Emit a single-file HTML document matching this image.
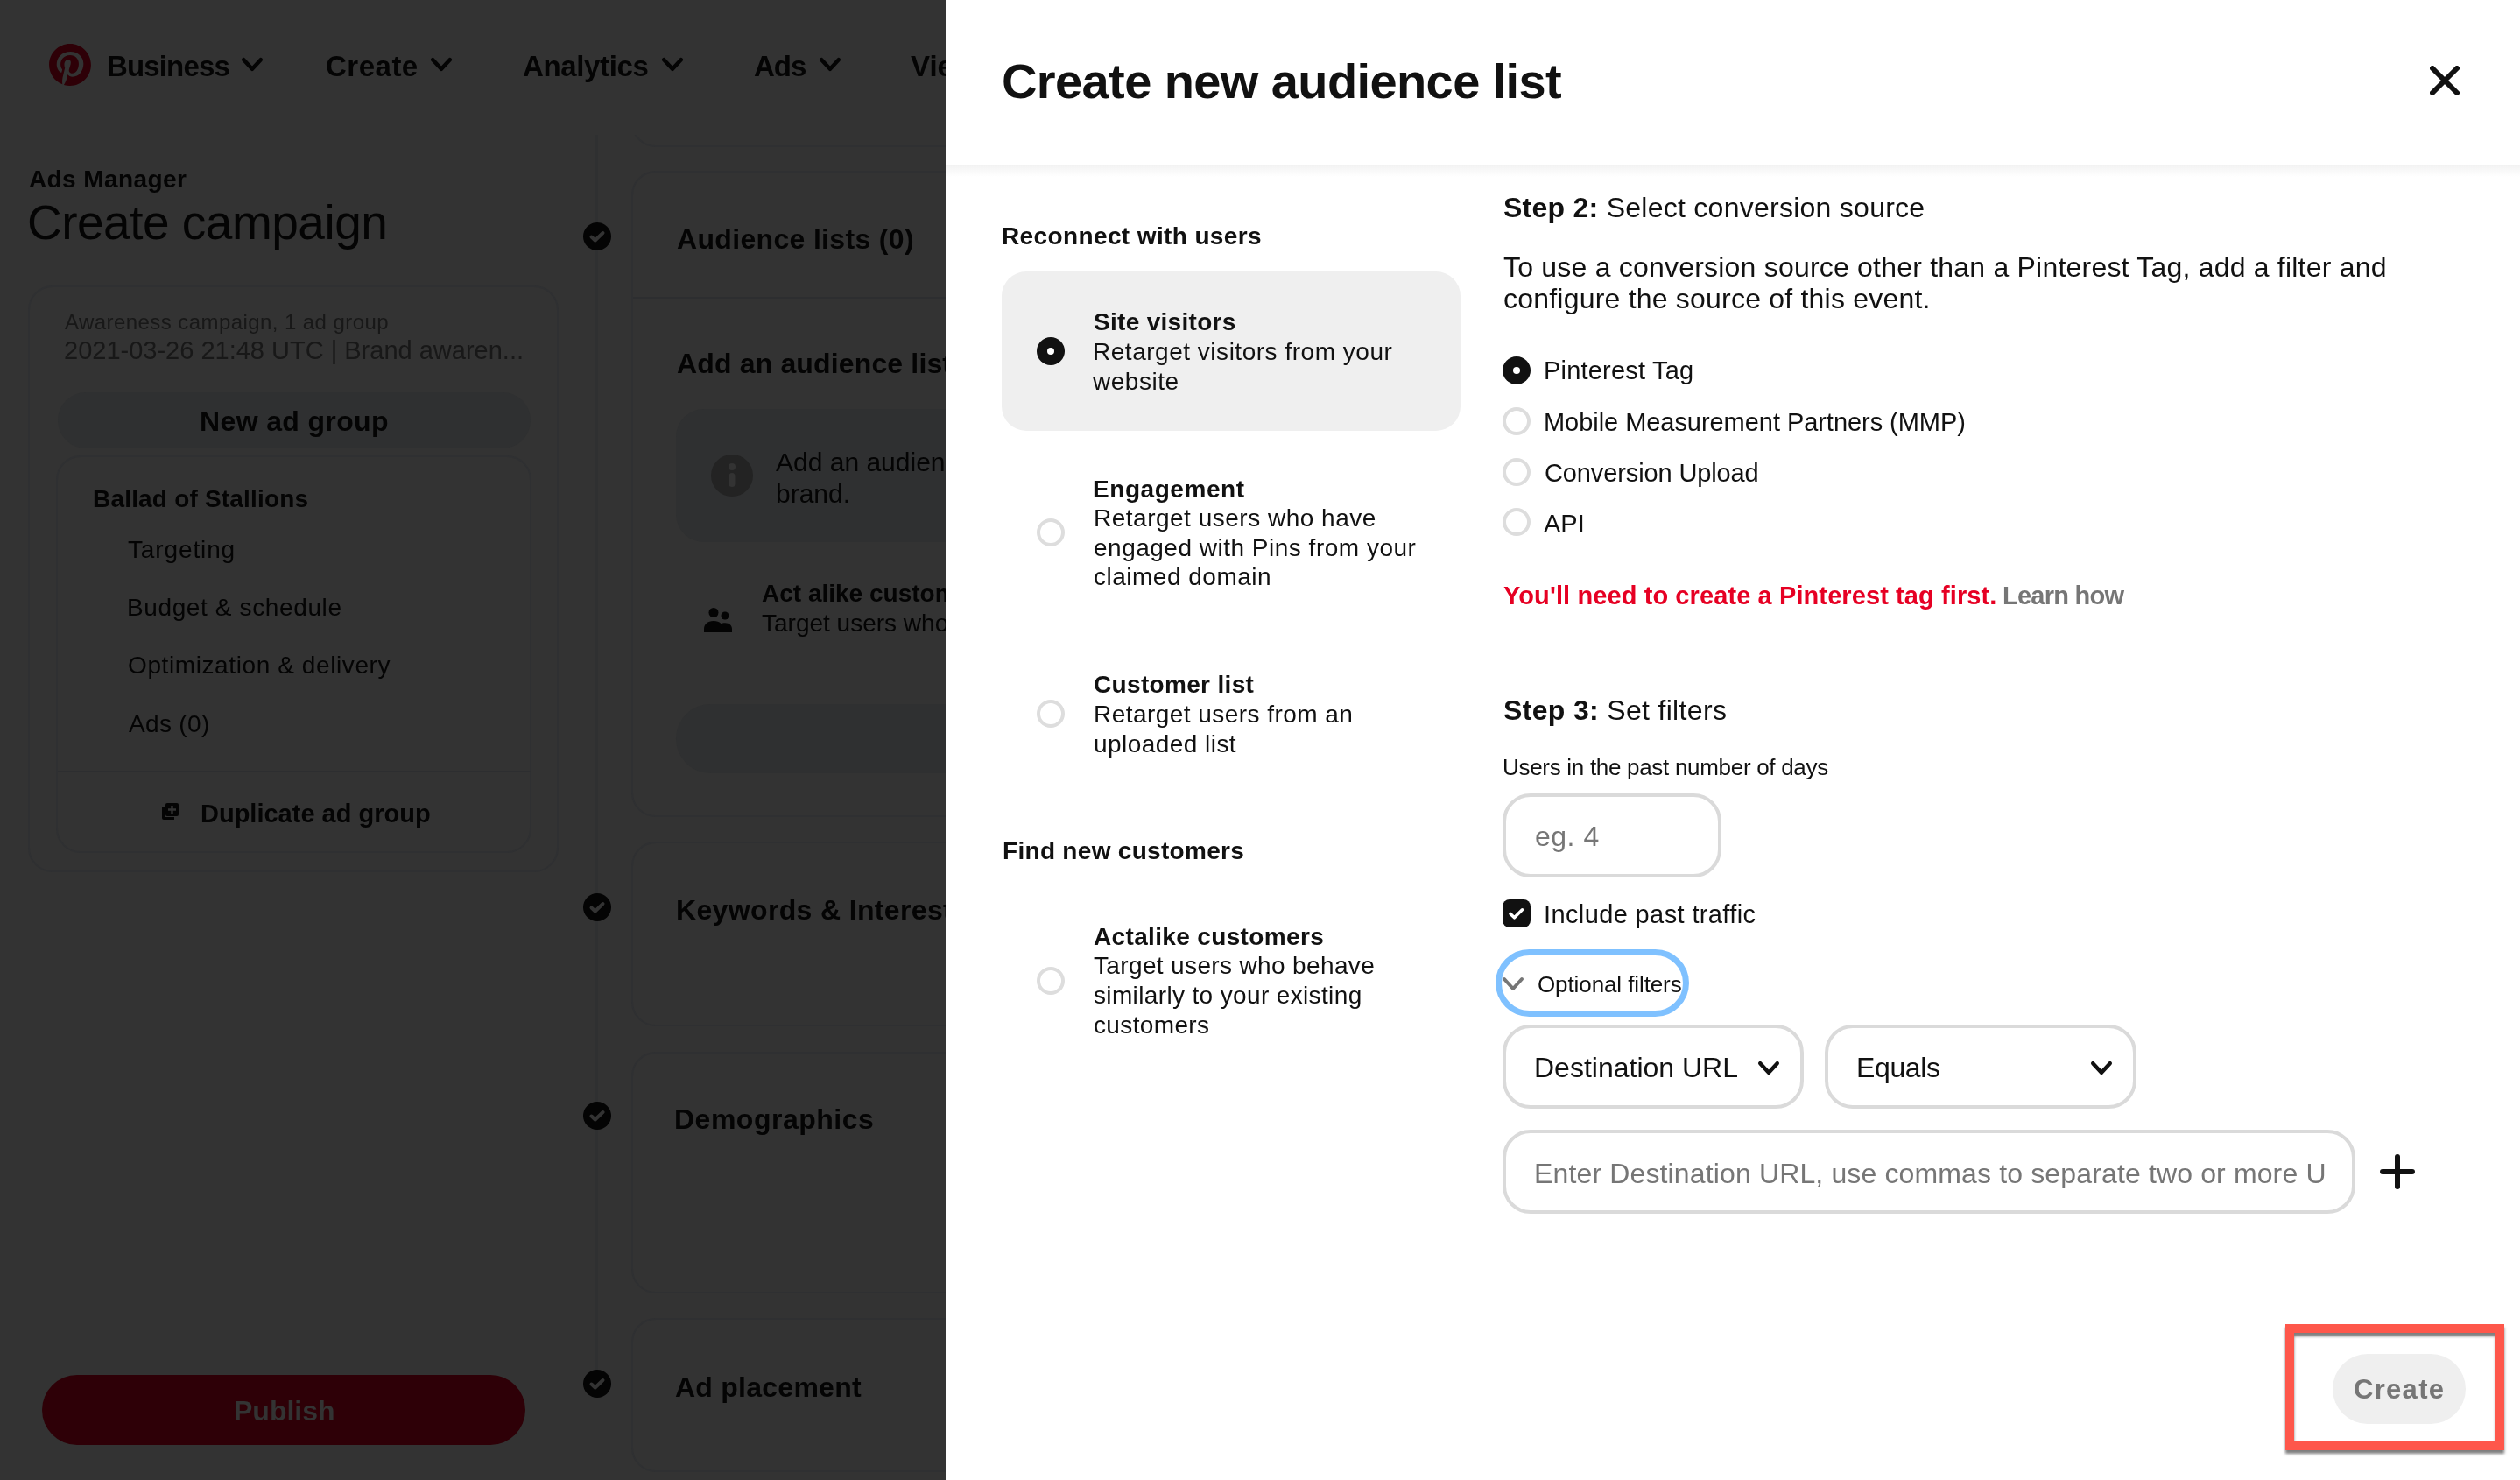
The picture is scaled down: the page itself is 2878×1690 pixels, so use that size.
<!DOCTYPE html>
<html><head><meta charset="utf-8"><style>
html,body{margin:0;padding:0;}
body{width:2878px;height:1690px;overflow:hidden;background:#333;position:relative;font-family:'Liberation Sans', sans-serif;}
.t{position:absolute;white-space:nowrap;-webkit-font-smoothing:antialiased;will-change:transform;}
.card{position:absolute;box-sizing:border-box;border:2px solid #2f3032;}
#modal{position:absolute;left:1080px;top:0;width:1798px;height:1690px;background:#fff;overflow:hidden;}
.inp{position:absolute;box-sizing:border-box;border:4px solid #dadada;border-radius:32px;background:#fff;}
</style></head><body>
<svg style="position:absolute;left:56px;top:50px" width="48" height="48" viewBox="0 0 24 24"><path fill="#2e0007" d="M12.017 0C5.396 0 .029 5.367.029 11.987c0 5.079 3.158 9.417 7.618 11.162-.105-.949-.199-2.403.041-3.439.219-.937 1.406-5.957 1.406-5.957s-.359-.72-.359-1.781c0-1.663.967-2.911 2.168-2.911 1.024 0 1.518.769 1.518 1.688 0 1.029-.653 2.567-.992 3.992-.285 1.193.6 2.165 1.775 2.165 2.128 0 3.768-2.245 3.768-5.487 0-2.861-2.063-4.869-5.008-4.869-3.41 0-5.409 2.562-5.409 5.199 0 1.033.394 2.143.889 2.741.099.12.112.225.085.345-.09.375-.293 1.199-.334 1.363-.053.225-.172.271-.401.165-1.495-.69-2.433-2.878-2.433-4.646 0-3.776 2.748-7.252 7.920-7.252 4.158 0 7.392 2.967 7.392 6.923 0 4.135-2.607 7.462-6.233 7.462-1.214 0-2.354-.629-2.758-1.379l-.749 2.848c-.269 1.045-1.004 2.352-1.498 3.146 1.123.345 2.306.535 3.55.535 6.607 0 11.985-5.365 11.985-11.987C23.970 5.390 18.592.026 11.985.026L12.017 0z"/></svg>
<div class="t" style="left:122px;top:58.6px;font-size:33px;line-height:33px;font-weight:700;color:#040404;letter-spacing:-0.85px;">Business</div>
<svg style="position:absolute;left:276px;top:66px;overflow:visible" width="24" height="15" viewBox="0 0 24 15"><path d="M2.25 2.25 L12.0 12.75 L21.75 2.25" fill="none" stroke="#040404" stroke-width="4.5" stroke-linecap="round" stroke-linejoin="round"/></svg>
<div class="t" style="left:372px;top:58.6px;font-size:33px;line-height:33px;font-weight:700;color:#040404;letter-spacing:0.5px;">Create</div>
<svg style="position:absolute;left:492px;top:66px;overflow:visible" width="24" height="15" viewBox="0 0 24 15"><path d="M2.25 2.25 L12.0 12.75 L21.75 2.25" fill="none" stroke="#040404" stroke-width="4.5" stroke-linecap="round" stroke-linejoin="round"/></svg>
<div class="t" style="left:597px;top:58.6px;font-size:33px;line-height:33px;font-weight:700;color:#040404;letter-spacing:-0.37px;">Analytics</div>
<svg style="position:absolute;left:756px;top:66px;overflow:visible" width="24" height="15" viewBox="0 0 24 15"><path d="M2.25 2.25 L12.0 12.75 L21.75 2.25" fill="none" stroke="#040404" stroke-width="4.5" stroke-linecap="round" stroke-linejoin="round"/></svg>
<div class="t" style="left:861px;top:58.6px;font-size:33px;line-height:33px;font-weight:700;color:#040404;letter-spacing:-1px;">Ads</div>
<svg style="position:absolute;left:936px;top:66px;overflow:visible" width="24" height="15" viewBox="0 0 24 15"><path d="M2.25 2.25 L12.0 12.75 L21.75 2.25" fill="none" stroke="#040404" stroke-width="4.5" stroke-linecap="round" stroke-linejoin="round"/></svg>
<div class="t" style="left:1040px;top:58.6px;font-size:33px;line-height:33px;font-weight:700;color:#040404;letter-spacing:0px;">View</div>
<div class="t" style="left:33px;top:190.8px;font-size:28px;line-height:28px;font-weight:700;color:#040404;letter-spacing:0.4px;">Ads Manager</div>
<div class="t" style="left:31px;top:227.4px;font-size:55px;line-height:55px;font-weight:400;color:#040404;letter-spacing:-0.5px;">Create campaign</div>
<div class="card" style="left:32px;top:326px;width:606px;height:670px;border-radius:28px"></div>
<div class="t" style="left:74px;top:355.7px;font-size:24px;line-height:24px;font-weight:400;color:#181818;letter-spacing:0.43px;">Awareness campaign, 1 ad group</div>
<div class="t" style="left:73px;top:385.5px;font-size:29px;line-height:29px;font-weight:400;color:#181818;letter-spacing:0px;">2021-03-26 21:48 UTC | Brand awaren...</div>
<div style="position:absolute;left:66px;top:448px;width:540px;height:64px;border-radius:32px;background:#2f3031"></div>
<div class="t" style="left:228px;top:464.9px;font-size:32px;line-height:32px;font-weight:700;color:#040404;letter-spacing:0.36px;">New ad group</div>
<div class="card" style="left:64px;top:520px;width:543px;height:454px;border-radius:28px"></div>
<div class="t" style="left:106px;top:556.3px;font-size:28px;line-height:28px;font-weight:700;color:#040404;letter-spacing:0.19px;">Ballad of Stallions</div>
<div class="t" style="left:146px;top:614.3px;font-size:28px;line-height:28px;font-weight:400;color:#040404;letter-spacing:0.87px;">Targeting</div>
<div class="t" style="left:145px;top:680.3px;font-size:28px;line-height:28px;font-weight:400;color:#040404;letter-spacing:0.62px;">Budget &amp; schedule</div>
<div class="t" style="left:145.6px;top:746.3px;font-size:28px;line-height:28px;font-weight:400;color:#040404;letter-spacing:0.6px;">Optimization &amp; delivery</div>
<div class="t" style="left:147px;top:812.8px;font-size:28px;line-height:28px;font-weight:400;color:#040404;letter-spacing:0.33px;">Ads (0)</div>
<div style="position:absolute;left:66px;top:880px;width:540px;height:2px;background:#2d2e30"></div>
<svg style="position:absolute;left:183px;top:916px" width="22" height="22" viewBox="0 0 22 22"><path d="M2 6v12a2 2 0 0 0 2 2h12v-3H5V6z" fill="#040404"/><rect x="6" y="1" width="15" height="15" rx="2" fill="#040404"/><path d="M13.5 4v9M9 8.5h9" stroke="#333" stroke-width="2.4"/></svg>
<div class="t" style="left:228.6px;top:914.5px;font-size:29px;line-height:29px;font-weight:700;color:#040404;letter-spacing:0px;">Duplicate ad group</div>
<div style="position:absolute;left:48px;top:1570px;width:552px;height:80px;border-radius:40px;background:#2e0007"></div>
<div class="t" style="left:266.6px;top:1594.9px;font-size:32px;line-height:32px;font-weight:700;color:#333;letter-spacing:0px;">Publish</div>
<div style="position:absolute;left:680px;top:154px;width:3px;height:1416px;background:#2f3031"></div>
<div class="card" style="left:721px;top:-40px;width:500px;height:208px;border-radius:28px;clip-path:inset(194px 0 0 0)"></div>
<div class="card" style="left:721px;top:195px;width:500px;height:738px;border-radius:28px"></div>
<svg style="position:absolute;left:666px;top:254px" width="32" height="32" viewBox="0 0 32 32"><circle cx="16" cy="16" r="16" fill="#040404"/><path d="M9.5 16.5l4.2 4 8.8-8.5" fill="none" stroke="#333" stroke-width="4" stroke-linecap="round" stroke-linejoin="round"/></svg>
<div class="t" style="left:773px;top:256.9px;font-size:32px;line-height:32px;font-weight:700;color:#040404;letter-spacing:0.33px;">Audience lists (0)</div>
<div style="position:absolute;left:723px;top:339px;width:400px;height:2px;background:#2d2e30"></div>
<div class="t" style="left:773px;top:398.9px;font-size:32px;line-height:32px;font-weight:700;color:#040404;letter-spacing:0.15px;">Add an audience list</div>
<div style="position:absolute;left:772px;top:467px;width:400px;height:152px;border-radius:32px;background:#2f3031"></div>
<svg style="position:absolute;left:812px;top:519px" width="48" height="48" viewBox="0 0 48 48"><circle cx="24" cy="24" r="24" fill="#232323"/><circle cx="24" cy="14" r="4" fill="#333"/><rect x="20.5" y="21" width="7" height="16" rx="3.5" fill="#333"/></svg>
<div class="t" style="left:886px;top:510.4px;font-size:30px;line-height:35.5px;font-weight:400;color:#040404;letter-spacing:0px;">Add an audience list to reach users who have engaged with your<br>brand.</div>
<svg style="position:absolute;left:804px;top:694px" width="32" height="28" viewBox="0 0 32 28"><circle cx="11" cy="5.5" r="5.5" fill="#040404"/><circle cx="24" cy="9" r="4.5" fill="#040404"/><path d="M0 28v-4c0-5 4-9 11-9s11 4 11 9v4z" fill="#040404"/><path d="M21 28v-4c0-2-.5-4-2-5.5 1.5-.8 3-1.2 5-1.2 5 0 8 3 8 7v3.7z" fill="#040404"/></svg>
<div class="t" style="left:870px;top:664.3px;font-size:28px;line-height:28px;font-weight:700;color:#040404;letter-spacing:0px;">Act alike customers</div>
<div class="t" style="left:870px;top:698.3px;font-size:28px;line-height:28px;font-weight:400;color:#040404;letter-spacing:0px;">Target users who behave similarly</div>
<div style="position:absolute;left:772px;top:804px;width:400px;height:79px;border-radius:40px;background:#2f3031"></div>
<div class="card" style="left:721px;top:961px;width:500px;height:211px;border-radius:28px"></div>
<svg style="position:absolute;left:666px;top:1020px" width="32" height="32" viewBox="0 0 32 32"><circle cx="16" cy="16" r="16" fill="#040404"/><path d="M9.5 16.5l4.2 4 8.8-8.5" fill="none" stroke="#333" stroke-width="4" stroke-linecap="round" stroke-linejoin="round"/></svg>
<div class="t" style="left:771.8px;top:1022.9px;font-size:32px;line-height:32px;font-weight:700;color:#040404;letter-spacing:0.35px;">Keywords &amp; Interests</div>
<div class="card" style="left:721px;top:1201px;width:500px;height:276px;border-radius:28px"></div>
<svg style="position:absolute;left:666px;top:1257.5px" width="32" height="32" viewBox="0 0 32 32"><circle cx="16" cy="16" r="16" fill="#040404"/><path d="M9.5 16.5l4.2 4 8.8-8.5" fill="none" stroke="#333" stroke-width="4" stroke-linecap="round" stroke-linejoin="round"/></svg>
<div class="t" style="left:769.8px;top:1261.9px;font-size:32px;line-height:32px;font-weight:700;color:#040404;letter-spacing:0.5px;">Demographics</div>
<div class="card" style="left:721px;top:1505px;width:500px;height:176px;border-radius:28px"></div>
<svg style="position:absolute;left:666px;top:1564px" width="32" height="32" viewBox="0 0 32 32"><circle cx="16" cy="16" r="16" fill="#040404"/><path d="M9.5 16.5l4.2 4 8.8-8.5" fill="none" stroke="#333" stroke-width="4" stroke-linecap="round" stroke-linejoin="round"/></svg>
<div class="t" style="left:770.8px;top:1567.9px;font-size:32px;line-height:32px;font-weight:700;color:#040404;letter-spacing:0.25px;">Ad placement</div>
<div id="modal">
<div class="t" style="left:64px;top:65.1px;font-size:56px;line-height:56px;font-weight:700;color:#111;letter-spacing:-0.6px;">Create new audience list</div>
<svg style="position:absolute;left:1695px;top:75px" width="34" height="34" viewBox="0 0 34 34"><path d="M3 3L31 31M31 3L3 31" stroke="#111" stroke-width="6" stroke-linecap="round"/></svg>
<div style="position:absolute;left:0;top:188px;width:1798px;height:14px;background:linear-gradient(#f2f2f2,#fafafa 60%,#fff)"></div>
<div class="t" style="left:64.40000000000009px;top:256.3px;font-size:28px;line-height:28px;font-weight:700;color:#111;letter-spacing:0.38px;">Reconnect with users</div>
<div style="position:absolute;left:64px;top:310px;width:524px;height:182px;border-radius:28px;background:#efefef"></div>
<div style="position:absolute;left:104px;top:385px;width:32px;height:32px;border-radius:50%;background:#111"><div style="position:absolute;left:12px;top:12px;width:8px;height:8px;border-radius:50%;background:#fff"></div></div>
<div class="t" style="left:169px;top:354.3px;font-size:28px;line-height:28px;font-weight:700;color:#111;letter-spacing:0.3px;">Site visitors</div>
<div class="t" style="left:168px;top:384.7px;font-size:28px;line-height:34px;font-weight:400;color:#111;letter-spacing:0.52px;">Retarget visitors from your<br>website</div>
<div style="position:absolute;left:104px;top:591.6px;width:32px;height:32px;border-radius:50%;box-sizing:border-box;border:4px solid #ddd;background:#fff"></div>
<div class="t" style="left:168px;top:545.0px;font-size:28px;line-height:28px;font-weight:700;color:#111;letter-spacing:0.55px;">Engagement</div>
<div class="t" style="left:169px;top:575.4px;font-size:28px;line-height:33.7px;font-weight:400;color:#111;letter-spacing:0.5px;">Retarget users who have<br>engaged with Pins from your<br>claimed domain</div>
<div style="position:absolute;left:104px;top:799px;width:32px;height:32px;border-radius:50%;box-sizing:border-box;border:4px solid #ddd;background:#fff"></div>
<div class="t" style="left:169px;top:768.3px;font-size:28px;line-height:28px;font-weight:700;color:#111;letter-spacing:0.33px;">Customer list</div>
<div class="t" style="left:169px;top:799.0px;font-size:28px;line-height:34px;font-weight:400;color:#111;letter-spacing:0.45px;">Retarget users from an<br>uploaded list</div>
<div class="t" style="left:64.70000000000005px;top:958.0px;font-size:28px;line-height:28px;font-weight:700;color:#111;letter-spacing:0.3px;">Find new customers</div>
<div style="position:absolute;left:104px;top:1104px;width:32px;height:32px;border-radius:50%;box-sizing:border-box;border:4px solid #ddd;background:#fff"></div>
<div class="t" style="left:169px;top:1056.3px;font-size:28px;line-height:28px;font-weight:700;color:#111;letter-spacing:0.35px;">Actalike customers</div>
<div class="t" style="left:169px;top:1086.0px;font-size:28px;line-height:34px;font-weight:400;color:#111;letter-spacing:0.36px;">Target users who behave<br>similarly to your existing<br>customers</div>
<div class="t" style="left:637px;top:220.9px;font-size:32px;line-height:32px;font-weight:400;color:#111;letter-spacing:0.26px;"><b>Step 2:</b> Select conversion source</div>
<div class="t" style="left:637px;top:286.9px;font-size:32px;line-height:36px;font-weight:400;color:#111;letter-spacing:0.21px;">To use a conversion source other than a Pinterest Tag, add a filter and<br>configure the source of this event.</div>
<div style="position:absolute;left:636px;top:407px;width:32px;height:32px;border-radius:50%;background:#111"><div style="position:absolute;left:12px;top:12px;width:8px;height:8px;border-radius:50%;background:#fff"></div></div>
<div class="t" style="left:683px;top:409.3px;font-size:29px;line-height:29px;font-weight:400;color:#111;letter-spacing:0.2px;">Pinterest Tag</div>
<div style="position:absolute;left:636px;top:464.5px;width:32px;height:32px;border-radius:50%;box-sizing:border-box;border:4px solid #ddd;background:#fff"></div>
<div class="t" style="left:683px;top:467.5px;font-size:29px;line-height:29px;font-weight:400;color:#111;letter-spacing:-0.05px;">Mobile Measurement Partners (MMP)</div>
<div style="position:absolute;left:636px;top:523px;width:32px;height:32px;border-radius:50%;box-sizing:border-box;border:4px solid #ddd;background:#fff"></div>
<div class="t" style="left:683.5px;top:526.1px;font-size:29px;line-height:29px;font-weight:400;color:#111;letter-spacing:-0.12px;">Conversion Upload</div>
<div style="position:absolute;left:636px;top:580.4px;width:32px;height:32px;border-radius:50%;box-sizing:border-box;border:4px solid #ddd;background:#fff"></div>
<div class="t" style="left:683px;top:583.5px;font-size:29px;line-height:29px;font-weight:400;color:#111;letter-spacing:0px;">API</div>
<div class="t" style="left:637px;top:665.5px;font-size:29px;line-height:29px;font-weight:700;color:#e60023;letter-spacing:0.1px;">You'll need to create a Pinterest tag first.</div>
<div class="t" style="left:1207px;top:665.5px;font-size:29px;line-height:29px;font-weight:700;color:#767676;letter-spacing:-0.75px;">Learn how</div>
<div class="t" style="left:637px;top:794.9px;font-size:32px;line-height:32px;font-weight:400;color:#111;letter-spacing:0.33px;"><b>Step 3:</b> Set filters</div>
<div class="t" style="left:636px;top:863.3px;font-size:26px;line-height:26px;font-weight:400;color:#111;letter-spacing:-0.3px;">Users in the past number of days</div>
<div class="inp" style="left:636px;top:906px;width:250px;height:96px"></div>
<div class="t" style="left:672.5px;top:938.6px;font-size:32px;line-height:32px;font-weight:400;color:#767676;letter-spacing:0.5px;">eg. 4</div>
<div style="position:absolute;left:636px;top:1027px;width:32px;height:32px;border-radius:8px;background:#111"><svg width="32" height="32" viewBox="0 0 32 32"><path d="M9 16.5l4.5 4.3 9-9" fill="none" stroke="#fff" stroke-width="3.6" stroke-linecap="round" stroke-linejoin="round"/></svg></div>
<div class="t" style="left:683px;top:1030.0px;font-size:29px;line-height:29px;font-weight:400;color:#111;letter-spacing:0.38px;">Include past traffic</div>
<div style="position:absolute;left:628px;top:1084px;width:221px;height:77px;box-sizing:border-box;border-radius:39px;border:7px solid #7fc1ff"></div>
<svg style="position:absolute;left:636px;top:1116px;overflow:visible" width="24" height="15" viewBox="0 0 24 15"><path d="M2.0 2.0 L12.0 13.0 L22.0 2.0" fill="none" stroke="#767676" stroke-width="4" stroke-linecap="round" stroke-linejoin="round"/></svg>
<div class="t" style="left:676px;top:1111.0px;font-size:26px;line-height:26px;font-weight:400;color:#111;letter-spacing:-0.1px;">Optional filters</div>
<div class="inp" style="left:636px;top:1170px;width:344px;height:96px"></div>
<div class="t" style="left:672px;top:1202.7px;font-size:32px;line-height:32px;font-weight:400;color:#111;letter-spacing:0px;">Destination URL</div>
<svg style="position:absolute;left:928px;top:1212px;overflow:visible" width="24" height="15" viewBox="0 0 24 15"><path d="M2.25 2.25 L12.0 12.75 L21.75 2.25" fill="none" stroke="#111" stroke-width="4.5" stroke-linecap="round" stroke-linejoin="round"/></svg>
<div class="inp" style="left:1004px;top:1170px;width:356px;height:96px"></div>
<div class="t" style="left:1040px;top:1202.7px;font-size:32px;line-height:32px;font-weight:400;color:#111;letter-spacing:-0.36px;">Equals</div>
<svg style="position:absolute;left:1308px;top:1212px;overflow:visible" width="24" height="15" viewBox="0 0 24 15"><path d="M2.25 2.25 L12.0 12.75 L21.75 2.25" fill="none" stroke="#111" stroke-width="4.5" stroke-linecap="round" stroke-linejoin="round"/></svg>
<div class="inp" style="left:636px;top:1290px;width:974px;height:96px"></div>
<div class="t" style="left:672px;top:1324.3px;font-size:32px;line-height:32px;font-weight:400;color:#767676;letter-spacing:0.14px;width:906px;overflow:hidden;white-space:nowrap">Enter Destination URL, use commas to separate two or more URLs</div>
<svg style="position:absolute;left:1638px;top:1318px" width="40" height="40" viewBox="0 0 40 40"><path d="M20 3v34M3 20h34" stroke="#111" stroke-width="6" stroke-linecap="round"/></svg>
<div style="position:absolute;left:1584px;top:1546px;width:152px;height:80px;border-radius:40px;background:#efefef"></div>
<div class="t" style="left:1608.4px;top:1570.8px;font-size:31px;line-height:31px;font-weight:700;color:#767676;letter-spacing:1.3px;">Create</div>
<div style="position:absolute;left:1530px;top:1512px;width:250px;height:144px;box-sizing:border-box;border:10px solid #fe574b;box-shadow:0 4px 3px rgba(0,0,0,.5), inset 0 4px 3px rgba(0,0,0,.5)"></div>
</div>
</body></html>
